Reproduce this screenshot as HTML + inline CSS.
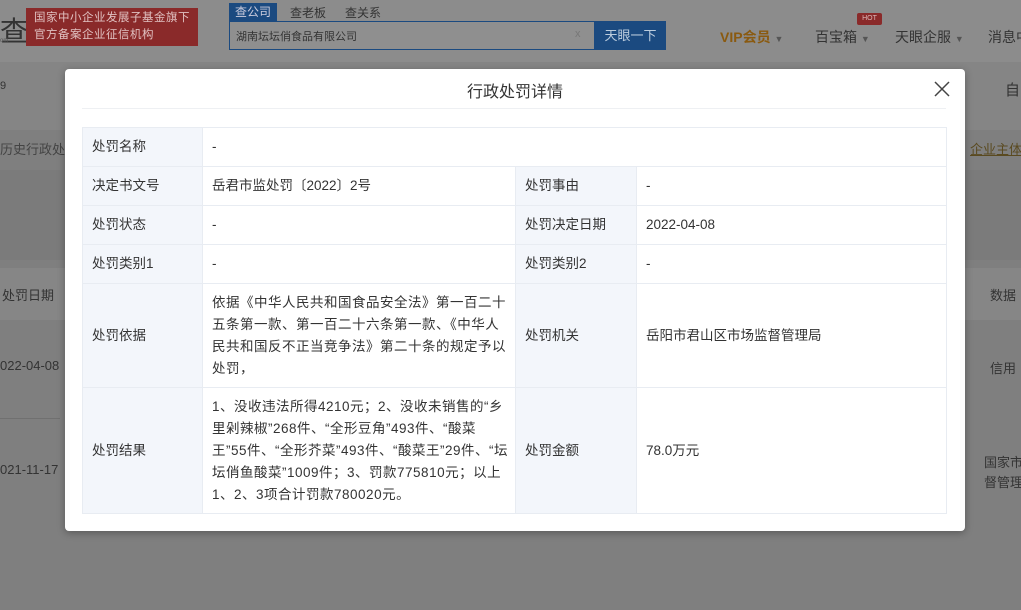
<!DOCTYPE html>
<html style="background:#7f7f7f"><head><meta charset="utf-8"><style>
*{margin:0;padding:0;box-sizing:border-box}
html,body{background:#7f7f7f}
body{width:1021px;height:610px;overflow:hidden;font-family:"Liberation Sans","Noto Sans CJK SC",sans-serif;position:relative;color:#333}
.abs{position:absolute;white-space:nowrap}
.bg{color:#333;font-size:13px}
table{position:absolute;left:82px;top:127px;width:864px;border-collapse:collapse;font-size:13.5px;color:#333;table-layout:fixed}
td{border:1px solid #e8ecf2;padding:0 9px;vertical-align:middle;line-height:26px}
td.l{background:#f3f6fb}
td.w{line-height:22px;letter-spacing:0.5px;padding:0 6px 0 9px}
</style></head><body>
<div class="abs" style="left:0;top:0;width:1021px;height:62px;background:#8c8c8c"></div>
<div class="abs" style="left:0;top:62px;width:1021px;height:68px;background:#858585"></div>
<div class="abs" style="left:0;top:170px;width:1021px;height:90px;background:#7b7b7b"></div>
<div class="abs" style="left:0;top:268px;width:1021px;height:52px;background:#868686"></div>
<div class="abs" style="left:0;top:418px;width:60px;height:1px;background:#707070"></div>
<div class="abs" style="left:0;top:10px;font-size:28px;color:#333">查</div>
<div class="abs" style="left:0;top:38px;font-size:6px;color:#555">om</div>
<div class="abs" style="left:26px;top:8px;width:172px;height:38px;background:#8a2a2a;color:#e0c0c0;font-size:11.5px;line-height:17px;padding:2px 8px;letter-spacing:0.5px">国家中小企业发展子基金旗下<br>官方备案企业征信机构</div>
<div class="abs" style="left:229px;top:3px;width:48px;height:18px;background:#1b4a80;color:#ccd;font-size:12px;line-height:18px;text-align:center">查公司</div>
<div class="abs bg" style="left:290px;top:4px;font-size:12px">查老板</div>
<div class="abs bg" style="left:345px;top:4px;font-size:12px">查关系</div>
<div class="abs" style="left:229px;top:21px;width:366px;height:29px;background:#8f8f8f;border:1px solid #1b4a80"></div>
<div class="abs bg" style="left:236px;top:28px;font-size:11px">湖南坛坛俏食品有限公司</div>
<div class="abs" style="left:575px;top:28px;font-size:11px;color:#777">x</div>
<div class="abs" style="left:595px;top:21px;width:71px;height:29px;background:#1b4a80;color:#bcd;font-size:13px;line-height:29px;text-align:center">天眼一下</div>
<div class="abs" style="left:720px;top:27px;font-size:14px;font-weight:bold;color:#8a5a10">VIP会员 <span style="font-size:9px;color:#555">▼</span></div>
<div class="abs bg" style="left:815px;top:27px;font-size:14px">百宝箱 <span style="font-size:9px;color:#555">▼</span></div>
<div class="abs" style="left:857px;top:13px;width:25px;height:12px;background:#8a2a2a;color:#dbb;font-size:7px;line-height:12px;text-align:center;border-radius:2px">HOT</div>
<div class="abs bg" style="left:895px;top:27px;font-size:14px">天眼企服 <span style="font-size:9px;color:#555">▼</span></div>
<div class="abs bg" style="left:988px;top:27px;font-size:14px">消息中</div>
<div class="abs bg" style="left:0;top:80px;font-size:11px">9</div>
<div class="abs bg" style="left:1005px;top:79px;font-size:15px">自</div>
<div class="abs bg" style="left:0;top:139px;color:#444">历史行政处</div>
<div class="abs" style="left:970px;top:139px;font-size:13px;color:#5a4a20;text-decoration:underline">企业主体</div>
<div class="abs bg" style="left:2px;top:285px">处罚日期</div>
<div class="abs bg" style="left:990px;top:285px">数据</div>
<div class="abs bg" style="left:0;top:358px">022-04-08</div>
<div class="abs bg" style="left:990px;top:358px">信用</div>
<div class="abs bg" style="left:0;top:462px">021-11-17</div>
<div class="abs bg" style="left:984px;top:453px;line-height:20px">国家市<br>督管理</div>

<div class="abs" style="left:65px;top:69px;width:900px;height:462px;background:#fff;border-radius:4px;box-shadow:0 2px 8px rgba(0,0,0,0.3)"></div>
<div class="abs" style="left:65px;top:78px;width:900px;text-align:center;font-size:16px;color:#333">行政处罚详情</div>
<svg class="abs" style="left:934px;top:81px" width="16" height="16" viewBox="0 0 16 16"><path d="M1 1L15 15M15 1L1 15" stroke="#444" stroke-width="1.5"/></svg>
<div class="abs" style="left:82px;top:108px;width:864px;height:1px;background:#eef0f3"></div>
<table>
<colgroup><col style="width:120px"><col style="width:313px"><col style="width:121px"><col style="width:310px"></colgroup>
<tr style="height:39px"><td class="l">处罚名称</td><td colspan="3">-</td></tr>
<tr style="height:39px"><td class="l">决定书文号</td><td>岳君市监处罚〔2022〕2号</td><td class="l">处罚事由</td><td>-</td></tr>
<tr style="height:39px"><td class="l">处罚状态</td><td>-</td><td class="l">处罚决定日期</td><td>2022-04-08</td></tr>
<tr style="height:39px"><td class="l">处罚类别1</td><td>-</td><td class="l">处罚类别2</td><td>-</td></tr>
<tr style="height:104px"><td class="l">处罚依据</td><td class="w">依据《中华人民共和国食品安全法》第一百二十五条第一款、第一百二十六条第一款、《中华人民共和国反不正当竞争法》第二十条的规定予以处罚，</td><td class="l">处罚机关</td><td>岳阳市君山区市场监督管理局</td></tr>
<tr style="height:126px"><td class="l">处罚结果</td><td class="w">1、没收违法所得4210元；2、没收未销售的“乡里剁辣椒”268件、“全形豆角”493件、“酸菜王”55件、“全形芥菜”493件、“酸菜王”29件、“坛坛俏鱼酸菜”1009件；3、罚款775810元；以上1、2、3项合计罚款780020元。</td><td class="l">处罚金额</td><td>78.0万元</td></tr>
</table>
</body></html>
